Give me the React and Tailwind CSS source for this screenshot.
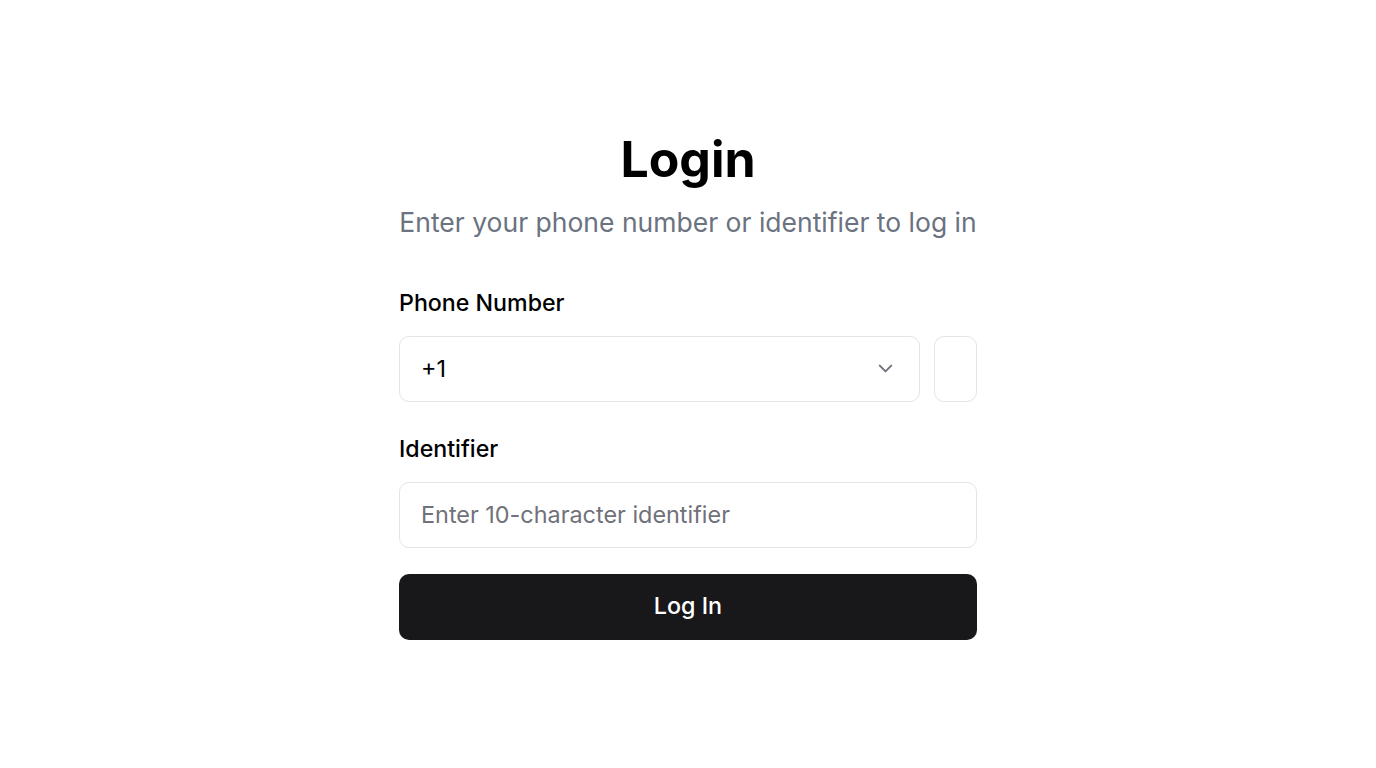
export default function App() {
  return (
    <div className="flex h-screen w-full items-center justify-center bg-white" style={{ fontFamily: "Inter, sans-serif" }}>
      <div className="flex w-[578px] flex-col">
        <h1 className="text-center text-[50px] font-bold leading-[60px] text-black">Login</h1>
        <p className="mt-[15px] whitespace-nowrap text-center text-[26.5px] leading-[36px] text-[#6b7280]">Enter your phone number or identifier to log in</p>
        <label className="mt-[49px] text-[23.2px] font-medium leading-[28px] text-black">Phone Number</label>
        <div className="mt-[19px] flex gap-[14px]">
          <button className="flex h-[66px] flex-1 items-center justify-between rounded-[10px] border-[1.5px] border-[#e4e4e7] bg-white pl-[21px] pr-[22px] text-[23.4px] text-black">
            <span>+1</span>
            <svg width="23" height="23" viewBox="0 0 24 24" fill="none" stroke="#71717a" strokeWidth="2" strokeLinecap="round" strokeLinejoin="round"><path d="m6 9 6 6 6-6" /></svg>
          </button>
          <input className="h-[66px] w-[43px] rounded-[10px] border-[1.5px] border-[#e4e4e7] bg-white outline-none" />
        </div>
        <label className="mt-[33px] text-[23.2px] font-medium leading-[28px] text-black">Identifier</label>
        <input
          placeholder="Enter 10-character identifier"
          className="mt-[19px] h-[66px] w-full rounded-[10px] border-[1.5px] border-[#e4e4e7] bg-white px-[21px] text-[23.4px] text-black outline-none placeholder:text-[#71717a]"
        />
        <button className="mt-[26px] h-[66px] w-full rounded-[10px] bg-[#18181b] text-[23.3px] font-medium text-white">Log In</button>
      </div>
    </div>
  );
}
